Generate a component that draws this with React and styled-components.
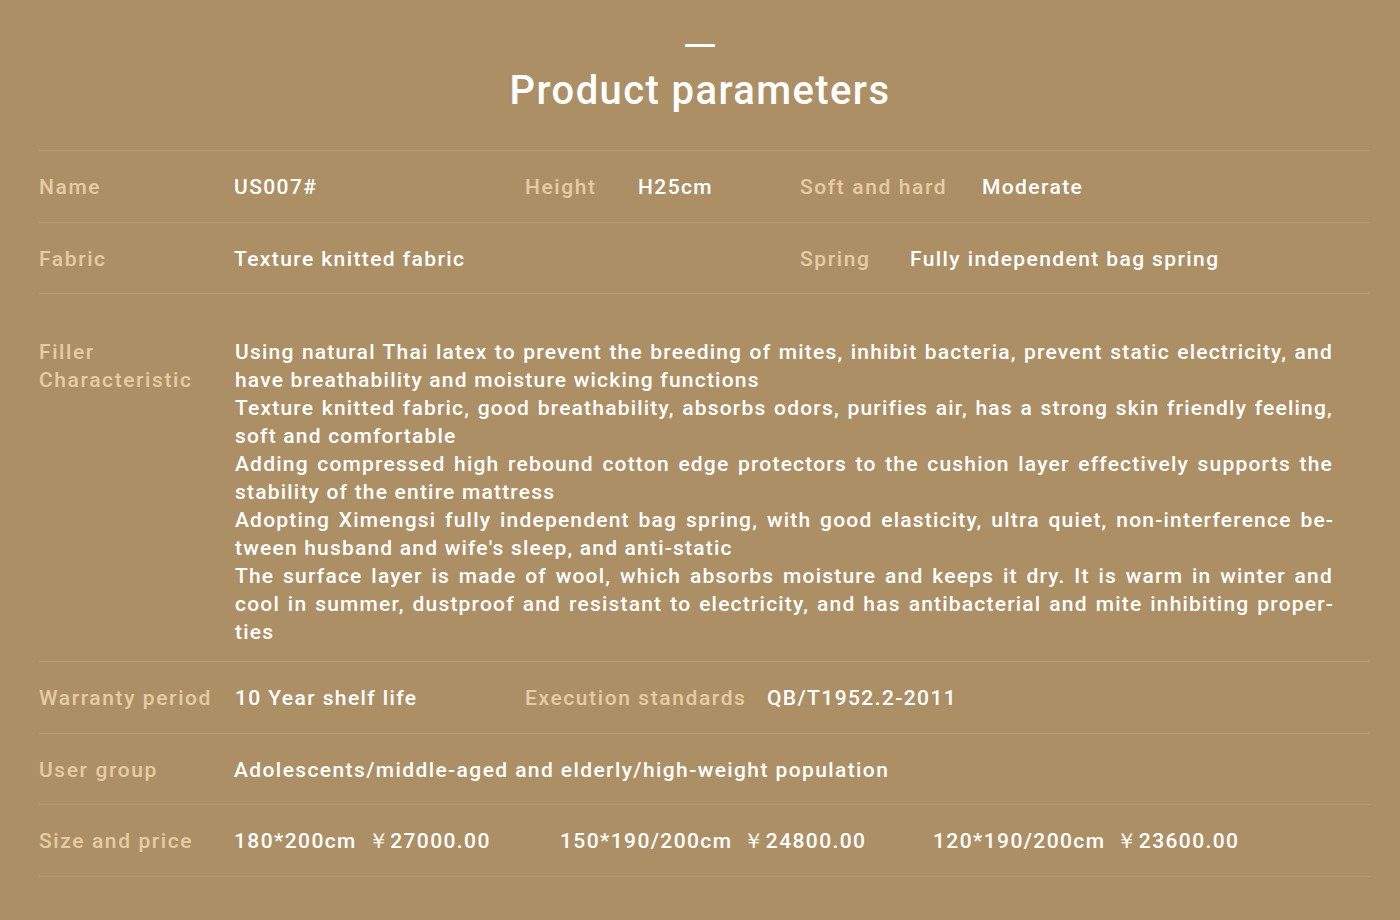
import React from 'react';
import styled, { createGlobalStyle } from 'styled-components';

const GlobalStyle = createGlobalStyle`
  html, body {
    margin: 0;
    padding: 0;
    background: #ad8f66;
  }
  body {
    font-family: Roboto, "Liberation Sans", sans-serif;
  }
`;

const Page = styled.div`
  width: 1400px;
  min-height: 920px;
  background: #ad8f66;
  box-sizing: border-box;
  padding: 44px 30px 0 39px;
`;

const Header = styled.div`
  display: flex;
  flex-direction: column;
  align-items: center;
  margin-bottom: 35px;
  padding-right: 9px;
`;

const Dash = styled.div`
  width: 30px;
  height: 3px;
  background: #fff;
  margin-bottom: 20px;
`;

const Title = styled.h1`
  margin: 0;
  font-size: 40px;
  line-height: 48px;
  font-weight: 500;
  color: #fff;
  letter-spacing: 1.4px;
`;

const Table = styled.div`
  border-top: 1px solid #b99d77;
`;

const Row = styled.div`
  display: flex;
  align-items: ${p => (p.$top ? 'flex-start' : 'center')};
  min-height: 71.5px;
  padding: ${p => (p.$top ? '44px 0 15px' : '2px 0 0')};
  box-sizing: border-box;
  border-bottom: 1px solid #b99d77;
`;

const Label = styled.div`
  flex: 0 0 ${p => p.$w}px;
  font-size: 21px;
  line-height: 28px;
  font-weight: 500;
  color: #e6cca4;
  letter-spacing: 1.6px;
  white-space: nowrap;
`;

const Value = styled.div`
  flex: ${p => (p.$w ? `0 0 ${p.$w}px` : '1 1 auto')};
  font-size: 21px;
  line-height: 28px;
  font-weight: 500;
  color: #fff;
  letter-spacing: 1.4px;
  padding-left: ${p => p.$pl || 0}px;
  box-sizing: border-box;
  white-space: nowrap;
`;

const Paragraph = styled.div`
  width: 1098px;
  font-size: 21px;
  line-height: 28px;
  font-weight: 500;
  color: #fff;
  letter-spacing: 1.2px;
  text-align: justify;
  hyphens: manual;
  padding-left: 1px;
`;

const Price = styled.span`
  margin-left: 11px;
`;

const fillerLines = [
  'Using natural Thai latex to prevent the breeding of mites, inhibit bacteria, prevent static electricity, and have breathability and moisture wicking functions',
  'Texture knitted fabric, good breathability, absorbs odors, purifies air, has a strong skin friendly feeling, soft and comfortable',
  'Adding compressed high rebound cotton edge protectors to the cushion layer effectively supports the stability of the entire mattress',
  "Adopting Ximengsi fully independent bag spring, with good elasticity, ultra quiet, non-interference be\u00ADtween husband and wife's sleep, and anti-static",
  'The surface layer is made of wool, which absorbs moisture and keeps it dry. It is warm in winter and cool in summer, dustproof and resistant to electricity, and has antibacterial and mite inhibiting proper\u00ADties',
];

const sizes = [
  { size: '180*200cm', price: '￥27000.00', w: 326 },
  { size: '150*190/200cm', price: '￥24800.00', w: 373 },
  { size: '120*190/200cm', price: '￥23600.00' },
];

const App = () => (
  <Page lang="en">
    <GlobalStyle />
    <Header>
      <Dash />
      <Title>Product parameters</Title>
    </Header>
    <Table>
      <Row>
        <Label $w={195}>Name</Label>
        <Value $w={291}>US007#</Value>
        <Label $w={113}>Height</Label>
        <Value $w={162}>H25cm</Value>
        <Label $w={182}>Soft and hard</Label>
        <Value>Moderate</Value>
      </Row>
      <Row>
        <Label $w={195}>Fabric</Label>
        <Value $w={566}>Texture knitted fabric</Value>
        <Label $w={110}>Spring</Label>
        <Value>Fully independent bag spring</Value>
      </Row>
      <Row $top>
        <Label $w={195}>Filler<br />Characteristic</Label>
        <Paragraph lang="en">
          {fillerLines.map(line => (
            <div key={line}>{line}</div>
          ))}
        </Paragraph>
      </Row>
      <Row>
        <Label $w={195}>Warranty period</Label>
        <Value $w={291} $pl={1}>10 Year shelf life</Value>
        <Label $w={242}>Execution standards</Label>
        <Value>QB/T1952.2-2011</Value>
      </Row>
      <Row>
        <Label $w={195}>User group</Label>
        <Value>Adolescents/middle-aged and elderly/high-weight population</Value>
      </Row>
      <Row>
        <Label $w={195}>Size and price</Label>
        {sizes.map(s => (
          <Value key={s.size} $w={s.w}>
            {s.size}
            <Price>{s.price}</Price>
          </Value>
        ))}
      </Row>
    </Table>
  </Page>
);

export default App;
